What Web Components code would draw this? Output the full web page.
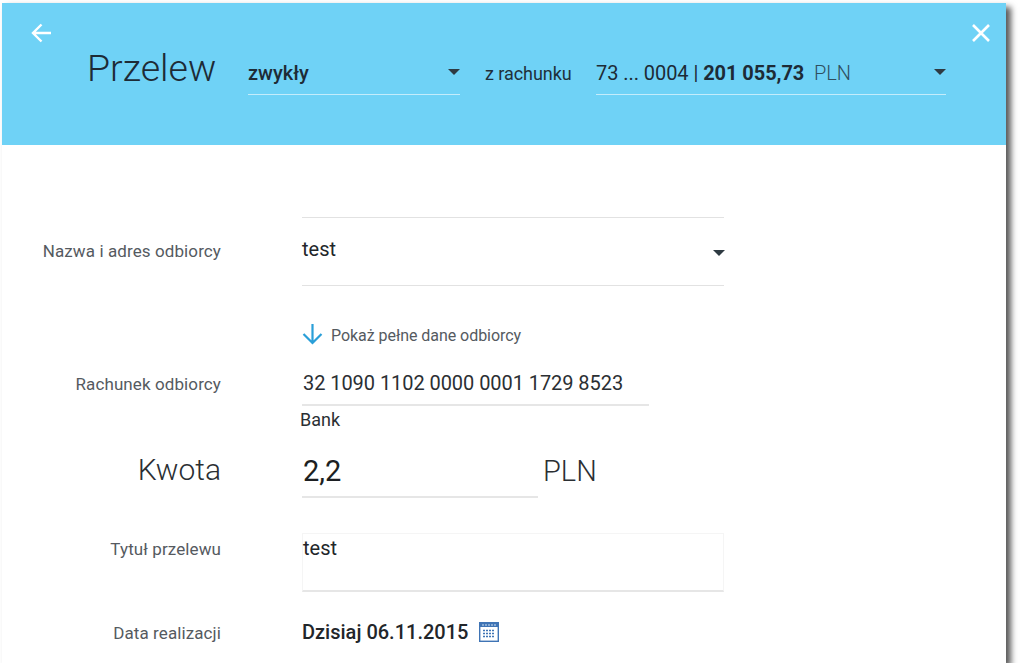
<!DOCTYPE html>
<html lang="pl">
<head>
<meta charset="utf-8">
<title>Przelew</title>
<style>
  html, body { margin: 0; height: 100%; background: #fff; overflow: hidden; }
  body { padding: 3px 0 0 2px; box-sizing: border-box; font-family: Roboto, "Liberation Sans", sans-serif; color: #2b2f33; }
</style>
</head>
<body>
<transfer-dialog>
  <dialog-header slot="header">
    <drop-select style="width:212px;font-weight:500" slot="kind">zwykły</drop-select>
    <drop-select style="width:350px;letter-spacing:-.06px" slot="account">
      <span>73 ... 0004 | <b style="font-weight:700">201 055,73</b>&nbsp; <span style="color:#2f4f5f;font-weight:300">PLN</span></span>
    </drop-select>
  </dialog-header>

  <form-row label="Nazwa i adres odbiorcy" style="height:80px;--label-top:23px">
    <recipient-select>test</recipient-select>
  </form-row>
  <form-row style="height:70px;--field-top:27px">
    <show-more>Pokaż pełne dane odbiorcy</show-more>
  </form-row>
  <form-row label="Rachunek odbiorcy" style="height:38px;--label-top:6px">
    <line-value style="width:347px">32 1090 1102 0000 0001 1729 8523</line-value>
  </form-row>
  <form-row style="height:39px">
    <span style="font-size:18px;line-height:30px;margin-left:-2px;color:#2b2f33">Bank</span>
  </form-row>
  <form-row label="Kwota" big style="height:89px;--label-top:6px">
    <amount-input currency="PLN">2,2</amount-input>
  </form-row>
  <form-row label="Tytuł przelewu" style="height:88px;--label-top:5px">
    <text-area-box>test</text-area-box>
  </form-row>
  <form-row label="Data realizacji" style="height:60px;--label-top:1px">
    <date-value>Dzisiaj 06.11.2015</date-value>
  </form-row>
</transfer-dialog>

<script>
// dialog shell: blue header on top, form rows below
class TransferDialog extends HTMLElement {
  constructor() {
    super();
    this.attachShadow({ mode: "open" }).innerHTML = `
      <style>
        :host {
          display: block;
          width: 1004px;
          height: 660px;
          background: #fff;
          box-shadow: 5px 4px 6px rgba(0, 0, 0, 0.65);
        }
        .form { padding-top: 72px; }
      </style>
      <slot name="header"></slot>
      <div class="form"><slot></slot></div>
    `;
  }
}

class DialogHeader extends HTMLElement {
  constructor() {
    super();
    this.attachShadow({ mode: "open" }).innerHTML = `
      <style>
        :host {
          display: block;
          position: relative;
          height: 142px;
          background: #6fd2f6;
          color: #1d2b36;
        }
        .bar {
          display: flex;
          align-items: flex-start;
          padding: 40px 0 0 85px;
        }
        h1 {
          margin: 0;
          width: 161px;
          font-size: 37.500px;
          font-weight: 300;
          line-height: 50px;
        }
        .from {
          width: 136px;
          padding-left: 25px;
          box-sizing: border-box;
          font-size: 18px;
          letter-spacing: -.05px;
          line-height: 22px;
          margin-top: 20px;
          color: #1f2f3a;
        }
        .icon { position: absolute; top: 18px; }
        .back { left: 27px; }
        .close { left: 967px; }
      </style>
      <svg class="icon back" width="24" height="24" viewBox="0 0 24 24" fill="none" stroke="#fff" stroke-width="2.4">
        <path d="M22 12H4M12.500 3.500L4 12l8.500 8.500"/>
      </svg>
      <svg class="icon close" width="24" height="24" viewBox="0 0 24 24" fill="none" stroke="#fff" stroke-width="2.6">
        <path d="M4 4l16 16M20 4L4 20"/>
      </svg>
      <div class="bar">
        <h1>Przelew</h1>
        <slot name="kind"></slot>
        <div class="from">z rachunku</div>
        <slot name="account"></slot>
      </div>
    `;
  }
}

// dropdown in the header, underlined with a small caret on the right
class DropSelect extends HTMLElement {
  constructor() {
    super();
    this.attachShadow({ mode: "open" }).innerHTML = `
      <style>
        :host {
          display: flex;
          align-items: center;
          justify-content: space-between;
          box-sizing: border-box;
          height: 52px;
          padding-top: 8px;
          border-bottom: 1px solid #c4ecfb;
          font-size: 20px;
          font-weight: 400;
        }
        i {
          width: 0;
          height: 0;
          border: 6.5px solid transparent;
          border-top: 6.5px solid #2e3a42;
          border-bottom: 0;
          margin-top: -2px;
        }
      </style>
      <span><slot></slot></span>
      <i></i>
    `;
  }
}

class FormRow extends HTMLElement {
  constructor() {
    super();
    const label = this.getAttribute("label") || "";
    const big = this.hasAttribute("big");
    this.attachShadow({ mode: "open" }).innerHTML = `
      <style>
        :host { display: flex; align-items: flex-start; }
        .label {
          width: 219px;
          margin-right: 81px;
          text-align: right;
          padding-top: var(--label-top, 0px);
          font-size: ${big ? "30px" : "17px"};
          font-weight: ${big ? 300 : 400};
          letter-spacing: ${big ? "0" : ".1px"};
          line-height: ${big ? "40px" : "22px"};
          color: ${big ? "#2b2f33" : "#555a5f"};
          flex: none;
        }
        .field { padding-top: var(--field-top, 0px); }
      </style>
      <div class="label">${label}</div>
      <div class="field"><slot></slot></div>
    `;
  }
}

class RecipientSelect extends HTMLElement {
  constructor() {
    super();
    this.attachShadow({ mode: "open" }).innerHTML = `
      <style>
        :host {
          display: flex;
          justify-content: space-between;
          align-items: center;
          box-sizing: border-box;
          width: 422px;
          height: 69px;
          border-top: 1px solid #e2e2e2;
          border-bottom: 1px solid #e2e2e2;
          padding-bottom: 5px;
          font-size: 20px;
          font-weight: 400;
          color: #22262a;
        }
        i {
          width: 0;
          height: 0;
          border: 6.500px solid transparent;
          border-top: 6.500px solid #2e3a42;
          border-bottom: 0;
          margin: 7px -1px 0 0;
        }
      </style>
      <span><slot></slot></span><i></i>
    `;
  }
}

class ShowMore extends HTMLElement {
  constructor() {
    super();
    this.attachShadow({ mode: "open" }).innerHTML = `
      <style>
        :host {
          display: flex;
          align-items: center;
          gap: 8px;
          font-size: 16px;
          letter-spacing: -.05px;
          line-height: 24px;
          color: #555a5f;
        }
        svg { flex: none; margin-top: -4px; }
      </style>
      <svg width="21" height="22" viewBox="0 0 21 22" fill="none" stroke="#2a9fd8" stroke-width="2.200">
        <path d="M10.500 1v18M1.500 11l9 9 9-9"/>
      </svg>
      <span><slot></slot></span>
    `;
  }
}

class LineValue extends HTMLElement {
  constructor() {
    super();
    this.attachShadow({ mode: "open" }).innerHTML = `
      <style>
        :host {
          display: block;
          box-sizing: border-box;
          height: 40px;
          margin-top: -1px;
          padding-left: 1px;
          border-bottom: 2px solid #e6e6e6;
          font-size: 20px;
          letter-spacing: -.06px;
          line-height: 34px;
          color: #2b2f33;
        }
      </style>
      <slot></slot>
    `;
  }
}

class AmountInput extends HTMLElement {
  constructor() {
    super();
    const currency = this.getAttribute("currency");
    this.attachShadow({ mode: "open" }).innerHTML = `
      <style>
        :host { display: flex; align-items: flex-start; }
        .value {
          box-sizing: border-box;
          width: 236px;
          height: 54px;
          padding: 6px 0 0 1px;
          border-bottom: 2px solid #e6e6e6;
          font-size: 29px;
          font-weight: 400;
          line-height: 42px;
          color: #1c1f22;
        }
        .cur {
          margin-left: 5px;
          padding-top: 6px;
          font-size: 29px;
          font-weight: 300;
          line-height: 42px;
          color: #2b2f33;
        }
      </style>
      <div class="value"><slot></slot></div>
      <div class="cur">${currency}</div>
    `;
  }
}

class TextAreaBox extends HTMLElement {
  constructor() {
    super();
    this.attachShadow({ mode: "open" }).innerHTML = `
      <style>
        :host {
          display: block;
          box-sizing: border-box;
          width: 422px;
          height: 59px;
          border: 1px solid #f5f5f5;
          border-bottom: 2px solid #e6e6e6;
          font-size: 20px;
          font-weight: 400;
          line-height: 29px;
          color: #22262a;
        }
      </style>
      <slot></slot>
    `;
  }
}

class DateValue extends HTMLElement {
  constructor() {
    super();
    this.attachShadow({ mode: "open" }).innerHTML = `
      <style>
        :host {
          display: flex;
          align-items: center;
          gap: 11px;
          font-size: 20px;
          font-weight: 500;
          line-height: 22px;
          color: #22262a;
        }
      </style>
      <slot></slot>
      <svg width="20" height="20" viewBox="0 0 20 20">
        <rect x="0.700" y="0.700" width="18.600" height="18.600" fill="#fff" stroke="#3f74b5" stroke-width="1.400"/>
        <rect x="1" y="1" width="18" height="4" fill="#3f74b5"/>
        <path d="M3 3h2M6 3h2M9 3h2M12 3h2M15 3h2" stroke="#cfe0f2" stroke-width="1.200"/>
        <path d="M4 8.500h12M4 11.500h12M4 14.500h12" stroke="#3f74b5" stroke-width="1.600" stroke-dasharray="2 1"/>
      </svg>
    `;
  }
}

customElements.define("transfer-dialog", TransferDialog);
customElements.define("dialog-header", DialogHeader);
customElements.define("drop-select", DropSelect);
customElements.define("form-row", FormRow);
customElements.define("recipient-select", RecipientSelect);
customElements.define("show-more", ShowMore);
customElements.define("line-value", LineValue);
customElements.define("amount-input", AmountInput);
customElements.define("text-area-box", TextAreaBox);
customElements.define("date-value", DateValue);
</script>
</body>
</html>
